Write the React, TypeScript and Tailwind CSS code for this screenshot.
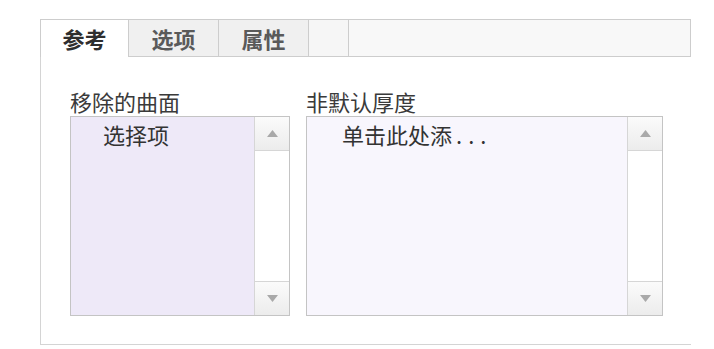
const FONT = { fontFamily: '"Noto Sans CJK SC", "Noto Sans", sans-serif' };

function ScrollBar() {
  return (
    <div className="flex h-full w-[35px] shrink-0 flex-col border-l border-[#d6d6d6] bg-white">
      <div className="flex h-[34px] items-center justify-center border-b border-[#d6d6d6] bg-gradient-to-b from-[#fbfbfb] to-[#ececec]">
        <svg width="11" height="7" viewBox="0 0 11 7">
          <polygon points="5.5,0 11,7 0,7" fill="#a9a9a9" />
        </svg>
      </div>
      <div className="flex-1" />
      <div className="flex h-[34px] items-center justify-center border-t border-[#d6d6d6] bg-gradient-to-b from-[#fbfbfb] to-[#ececec]">
        <svg width="11" height="7" viewBox="0 0 11 7">
          <polygon points="0,0 11,0 5.5,7" fill="#a9a9a9" />
        </svg>
      </div>
    </div>
  );
}

function ListBox({ label, children, width, bg, pad }: { label: string; children: React.ReactNode; width: string; bg: string; pad: string }) {
  return (
    <div className={`flex flex-col ${width}`}>
      <div className="mb-[4px] h-[22px] text-[22px] leading-[22px] text-[#3a3a3a]">{label}</div>
      <div className={`flex h-[200px] border border-[#c4c4c4] ${bg}`}>
        <div className={`flex-1 pt-[5px] text-[22px] leading-[24px] text-[#333] ${pad}`}>{children}</div>
        <ScrollBar />
      </div>
    </div>
  );
}

export default function App() {
  const tabs = [
    { name: "参考", w: "w-[88px]", active: true },
    { name: "选项", w: "w-[90px]", active: false },
    { name: "属性", w: "w-[90px]", active: false },
  ];
  return (
    <div className="h-[349px] w-[714px] overflow-hidden bg-white pl-[40px] pt-[19px]" style={FONT}>
      <div className="w-[651px]">
        <div className="flex h-[38px]">
          {tabs.map((t) => (
            <div
              key={t.name}
              className={`flex ${t.w} items-center justify-center border-l border-t border-[#cdcdcd] text-[22px] font-bold ${
                t.active ? "bg-white text-[#2e2e2e]" : "border-b bg-[#f0f0f0] text-[#5a5a5a]"
              }`}
            >
              {t.name}
            </div>
          ))}
          <div className="w-[40px] border-b border-l border-t border-[#cdcdcd] bg-[#f6f6f6]" />
          <div className="flex-1 border-b border-l border-r border-t border-[#cdcdcd] bg-[#f8f8f8]" />
        </div>
        <div className="flex h-[288px] gap-[16px] border-b border-l border-[#d4d4d4] pl-[29px] pt-[33px]">
          <ListBox label="移除的曲面" width="w-[220px]" bg="bg-[#eee9f8]" pad="pl-[32px]">
            选择项
          </ListBox>
          <ListBox label="非默认厚度" width="w-[357px]" bg="bg-[#f8f6fd]" pad="pl-[35px]">
            单击此处添<span className="pl-[4px] tracking-[6px]">...</span>
          </ListBox>
        </div>
      </div>
    </div>
  );
}
